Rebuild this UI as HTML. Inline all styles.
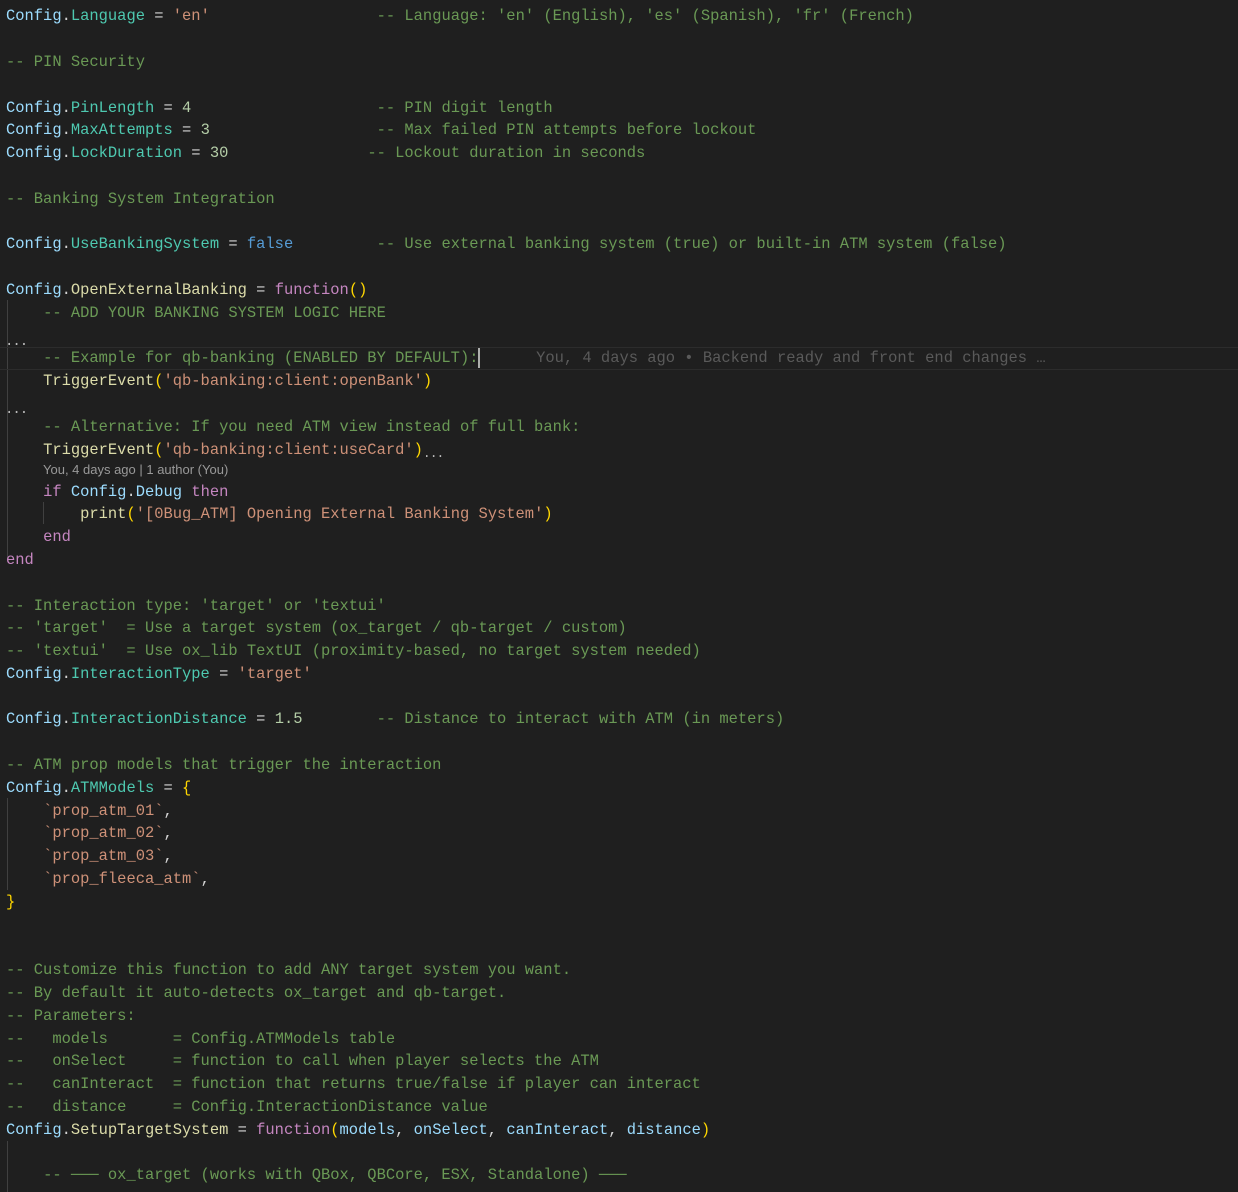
<!DOCTYPE html>
<html><head><meta charset="utf-8"><style>
html,body{margin:0;padding:0;background:#1f1f1f;width:1238px;height:1192px;overflow:hidden}
.ed{position:absolute;left:0;top:5.4px;width:1238px;font-family:"Liberation Mono",monospace;font-size:15.45px;color:#d4d4d4}
.l{height:22.8px;line-height:22.8px;white-space:pre;padding-left:6px;position:relative}
.cl{height:19.2px;line-height:17px;font-family:"Liberation Sans",sans-serif;font-size:13px;color:#999;padding-left:43px}
.v{color:#9cdcfe}.p{color:#4ec9b0}.c{color:#6a9955}.s{color:#ce9178}.n{color:#b5cea8}.k{color:#569cd6}.kw{color:#c586c0}.f{color:#dcdcaa}.b{color:#ffd700}.g{color:#5a5a5a}
.cur{box-shadow:inset 0 1px 0 #2c2c2c,inset 0 -1px 0 #2c2c2c}
.ig{position:absolute;width:1px;background:#404040}
.dots{position:absolute;left:5px;font-size:14px;color:#bbb;top:6px;letter-spacing:-1px}
.caret{display:inline-block;width:2px;height:20px;background:#aeafad;vertical-align:middle}
</style></head><body>
<div class="ig" style="left:7px;top:300px;height:258px"></div>
<div class="ig" style="left:43px;top:502px;height:22px"></div>
<div class="ig" style="left:7px;top:798px;height:92px"></div>
<div class="ig" style="left:7px;top:1141px;height:51px"></div>
<div class="ed">
<div class="l"><span class="v">Config</span>.<span class="p">Language</span> = <span class="s">'en'</span>                  <span class="c">-- Language: 'en' (English), 'es' (Spanish), 'fr' (French)</span></div>
<div class="l"> </div>
<div class="l"><span class="c">-- PIN Security</span></div>
<div class="l"> </div>
<div class="l"><span class="v">Config</span>.<span class="p">PinLength</span> = <span class="n">4</span>                    <span class="c">-- PIN digit length</span></div>
<div class="l"><span class="v">Config</span>.<span class="p">MaxAttempts</span> = <span class="n">3</span>                  <span class="c">-- Max failed PIN attempts before lockout</span></div>
<div class="l"><span class="v">Config</span>.<span class="p">LockDuration</span> = <span class="n">30</span>               <span class="c">-- Lockout duration in seconds</span></div>
<div class="l"> </div>
<div class="l"><span class="c">-- Banking System Integration</span></div>
<div class="l"> </div>
<div class="l"><span class="v">Config</span>.<span class="p">UseBankingSystem</span> = <span class="k">false</span>         <span class="c">-- Use external banking system (true) or built-in ATM system (false)</span></div>
<div class="l"> </div>
<div class="l"><span class="v">Config</span>.<span class="f">OpenExternalBanking</span> = <span class="kw">function</span><span class="b">()</span></div>
<div class="l">    <span class="c">-- ADD YOUR BANKING SYSTEM LOGIC HERE</span></div>
<div class="l"><span class="dots">...</span> </div>
<div class="l cur">    <span class="c">-- Example for qb-banking (ENABLED BY DEFAULT):</span><span class="caret"></span>      <span class="g">You, 4 days ago • Backend ready and front end changes …</span></div>
<div class="l">    <span class="f">TriggerEvent</span><span class="b">(</span><span class="s">'qb-banking:client:openBank'</span><span class="b">)</span></div>
<div class="l"><span class="dots">...</span> </div>
<div class="l">    <span class="c">-- Alternative: If you need ATM view instead of full bank:</span></div>
<div class="l">    <span class="f">TriggerEvent</span><span class="b">(</span><span class="s">'qb-banking:client:useCard'</span><span class="b">)</span><span style="font-size:13px;color:#bbb;position:relative;top:3px;letter-spacing:-1px">...</span></div>
<div class="cl">You, 4 days ago | 1 author (You)</div>
<div class="l">    <span class="kw">if</span> <span class="v">Config</span>.<span class="v">Debug</span> <span class="kw">then</span></div>
<div class="l">        <span class="f">print</span><span class="b">(</span><span class="s">'[0Bug_ATM] Opening External Banking System'</span><span class="b">)</span></div>
<div class="l">    <span class="kw">end</span></div>
<div class="l"><span class="kw">end</span></div>
<div class="l"> </div>
<div class="l"><span class="c">-- Interaction type: 'target' or 'textui'</span></div>
<div class="l"><span class="c">-- 'target'  = Use a target system (ox_target / qb-target / custom)</span></div>
<div class="l"><span class="c">-- 'textui'  = Use ox_lib TextUI (proximity-based, no target system needed)</span></div>
<div class="l"><span class="v">Config</span>.<span class="p">InteractionType</span> = <span class="s">'target'</span></div>
<div class="l"> </div>
<div class="l"><span class="v">Config</span>.<span class="p">InteractionDistance</span> = <span class="n">1.5</span>        <span class="c">-- Distance to interact with ATM (in meters)</span></div>
<div class="l"> </div>
<div class="l"><span class="c">-- ATM prop models that trigger the interaction</span></div>
<div class="l"><span class="v">Config</span>.<span class="p">ATMModels</span> = <span class="b">{</span></div>
<div class="l">    <span class="s">`prop_atm_01`</span>,</div>
<div class="l">    <span class="s">`prop_atm_02`</span>,</div>
<div class="l">    <span class="s">`prop_atm_03`</span>,</div>
<div class="l">    <span class="s">`prop_fleeca_atm`</span>,</div>
<div class="l"><span class="b">}</span></div>
<div class="l"> </div>
<div class="l"> </div>
<div class="l"><span class="c">-- Customize this function to add ANY target system you want.</span></div>
<div class="l"><span class="c">-- By default it auto-detects ox_target and qb-target.</span></div>
<div class="l"><span class="c">-- Parameters:</span></div>
<div class="l"><span class="c">--   models       = Config.ATMModels table</span></div>
<div class="l"><span class="c">--   onSelect     = function to call when player selects the ATM</span></div>
<div class="l"><span class="c">--   canInteract  = function that returns true/false if player can interact</span></div>
<div class="l"><span class="c">--   distance     = Config.InteractionDistance value</span></div>
<div class="l"><span class="v">Config</span>.<span class="f">SetupTargetSystem</span> = <span class="kw">function</span><span class="b">(</span><span class="v">models</span>, <span class="v">onSelect</span>, <span class="v">canInteract</span>, <span class="v">distance</span><span class="b">)</span></div>
<div class="l"> </div>
<div class="l">    <span class="c">-- ─── ox_target (works with QBox, QBCore, ESX, Standalone) ───</span></div>
</div>
</body></html>
